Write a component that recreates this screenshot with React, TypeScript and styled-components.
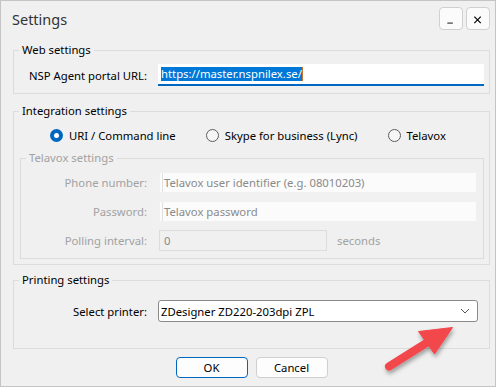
import React from "react";
import styled, { createGlobalStyle, css } from "styled-components";

const GlobalStyle = createGlobalStyle`
  html, body { margin: 0; padding: 0; background: #f0f0f0; }
  body {
    font-family: "Noto Sans", "Open Sans", sans-serif;
    font-size: 11.3px;
    color: #000;
  }
  * { box-sizing: border-box; }
`;

const Window = styled.div`
  position: relative;
  width: 496px;
  height: 387px;
  border: 1px solid #c4c4c4;
  background: #f0f0f0;
  display: flex;
  flex-direction: column;
  overflow: hidden;
`;

const TitleBar = styled.div`
  display: flex;
  align-items: flex-start;
  height: 41px;
  padding: 6px 5px 0 11px;
`;

const Title = styled.div`
  flex: 1;
  font-size: 14.5px;
  line-height: 20px;
  padding-top: 2px;
  color: #333;
`;

const CaptionButton = styled.div`
  width: 24px;
  height: 23px;
  margin-left: 3px;
  border: 1px solid #d0d0d0;
  border-radius: 4px;
  background: #fbfbfb;
  display: flex;
  align-items: center;
  justify-content: center;
`;

const Body = styled.div`
  flex: 1;
  display: flex;
  flex-direction: column;
  padding: 0 5px 0 12px;
`;

const Group = styled.fieldset<{ $mt?: number }>`
  margin: ${(p) => p.$mt ?? 0}px 0 0 0;
  padding: 0;
  min-width: 0;
  border: 1px solid #dcdcdc;
`;

const Legend = styled.legend<{ $disabled?: boolean }>`
  margin-left: 5px;
  padding: 0 3px;
  line-height: 16px;
  color: ${(p) => (p.$disabled ? "#a2a2a2" : "#000")};
`;

const GroupBody = styled.div<{ $pad: string; $gap?: number }>`
  display: flex;
  flex-direction: column;
  padding: ${(p) => p.$pad};
  gap: ${(p) => p.$gap ?? 0}px;
`;

const FieldRow = styled.div`
  display: flex;
  align-items: center;
`;

const FieldLabel = styled.div<{ $w: number; $gap: number; $disabled?: boolean }>`
  width: ${(p) => p.$w}px;
  margin-right: ${(p) => p.$gap}px;
  text-align: right;
  white-space: nowrap;
  color: ${(p) => (p.$disabled ? "#a2a2a2" : "#000")};
`;

const UrlBox = styled.div`
  flex: 1;
  height: 22px;
  background: #fff;
  border-bottom: 2px solid #0067c0;
  padding-left: 3px;
  display: flex;
  align-items: center;
`;

const Selected = styled.span`
  background: #0078d7;
  color: #fff;
  line-height: 14px;
  height: 14px;
  display: inline-block;
`;

const Caret = styled.span`
  width: 1px;
  height: 14px;
  background: #c8702c;
`;

const DisabledBox = styled.div<{ $w?: number; $inactive?: boolean }>`
  height: 21px;
  ${(p) => (p.$w ? css`width: ${p.$w}px;` : css`flex: 1;`)}
  padding-left: 4px;
  display: flex;
  align-items: center;
  color: #8a8a8a;
  white-space: nowrap;
  ${(p) =>
    p.$inactive
      ? css`
          background: #f0f0f0;
          border: 1px solid #dcdcdc;
        `
      : css`
          background: #fbfbfb;
          border: 1px solid #f1f1f1;
          box-shadow: inset 2px 0 0 #fbfbfb, inset 3px 0 0 #e0e0e0;
        `}
`;

const Unit = styled.span`
  margin-left: 10px;
  color: #a2a2a2;
`;

const RadioRow = styled.div`
  display: flex;
  align-items: center;
  height: 16px;
  gap: 30px;
  padding-left: 30px;
`;

const RadioLabel = styled.label`
  display: flex;
  align-items: center;
  gap: 6px;
  white-space: nowrap;
`;

const RadioCircle = styled.span<{ $checked?: boolean }>`
  width: 13px;
  height: 13px;
  border-radius: 50%;
  display: flex;
  align-items: center;
  justify-content: center;
  ${(p) =>
    p.$checked
      ? css`
          background: #0067c0;
          &::after {
            content: "";
            width: 5px;
            height: 5px;
            border-radius: 50%;
            background: #fff;
          }
        `
      : css`
          border: 1px solid #5c5c5c;
          background: #f6f6f6;
        `}
`;

const SelectBox = styled.div`
  flex: 1;
  height: 22px;
  background: #fff;
  border: 1px solid #8a8a8a;
  border-radius: 3px;
  padding: 0 5px 0 2px;
  display: flex;
  align-items: center;
  justify-content: space-between;
`;

const ButtonRow = styled.div`
  display: flex;
  justify-content: center;
  gap: 8px;
  margin-top: 8px;
`;

const Button = styled.div<{ $primary?: boolean }>`
  width: 72px;
  height: 21px;
  border-radius: 4px;
  background: #fdfdfd;
  border: 1px solid ${(p) => (p.$primary ? "#0067c0" : "#d0d0d0")};
  display: flex;
  align-items: center;
  justify-content: center;
`;

const ArrowOverlay = styled.svg`
  position: absolute;
  left: 369px;
  top: 317px;
  pointer-events: none;
`;

export default function App() {
  return (
    <>
      <GlobalStyle />
      <Window>
        <TitleBar>
          <Title>Settings</Title>
          <CaptionButton>
            <svg width="24" height="23" viewBox="0 0 24 23">
              <line x1="8" y1="16.5" x2="14" y2="16.5" stroke="#000" strokeWidth="1" />
            </svg>
          </CaptionButton>
          <CaptionButton>
            <svg width="24" height="23" viewBox="0 0 24 23">
              <path d="M8 9.5 L15 16.5 M15 9.5 L8 16.5" stroke="#000" strokeWidth="1.3" />
            </svg>
          </CaptionButton>
        </TitleBar>
        <Body>
          <Group>
            <Legend>Web settings</Legend>
            <GroupBody $pad="6px 5px 7px 0">
              <FieldRow>
                <FieldLabel $w={133} $gap={11}>NSP Agent portal URL:</FieldLabel>
                <UrlBox>
                  <Selected>https://master.nspnilex.se/</Selected>
                  <Caret />
                </UrlBox>
              </FieldRow>
            </GroupBody>
          </Group>

          <Group $mt={9}>
            <Legend>Integration settings</Legend>
            <GroupBody $pad="8px 5px 5px 6px" $gap={7}>
              <RadioRow>
                <RadioLabel>
                  <RadioCircle $checked />
                  URI / Command line
                </RadioLabel>
                <RadioLabel>
                  <RadioCircle />
                  Skype for business (Lync)
                </RadioLabel>
                <RadioLabel>
                  <RadioCircle />
                  Telavox
                </RadioLabel>
              </RadioRow>
              <Group>
                <Legend $disabled>Telavox settings</Legend>
                <GroupBody $pad="6px 6px 7px 0" $gap={8}>
                  <FieldRow>
                    <FieldLabel $w={126} $gap={12} $disabled>Phone number:</FieldLabel>
                    <DisabledBox>Telavox user identifier (e.g. 08010203)</DisabledBox>
                  </FieldRow>
                  <FieldRow>
                    <FieldLabel $w={126} $gap={12} $disabled>Password:</FieldLabel>
                    <DisabledBox>Telavox password</DisabledBox>
                  </FieldRow>
                  <FieldRow>
                    <FieldLabel $w={126} $gap={12} $disabled>Polling interval:</FieldLabel>
                    <DisabledBox $w={168} $inactive>0</DisabledBox>
                    <Unit>seconds</Unit>
                  </FieldRow>
                </GroupBody>
              </Group>
            </GroupBody>
          </Group>

          <Group $mt={7}>
            <Legend>Printing settings</Legend>
            <GroupBody $pad="12px 11px 26px 0">
              <FieldRow>
                <FieldLabel $w={133} $gap={11}>Select printer:</FieldLabel>
                <SelectBox>
                  <span>ZDesigner ZD220-203dpi ZPL</span>
                  <svg width="14" height="6" viewBox="0 0 14 6">
                    <polyline points="3,1 7,5 11,1" fill="none" stroke="#555" strokeWidth="1" />
                  </svg>
                </SelectBox>
              </FieldRow>
            </GroupBody>
          </Group>

          <ButtonRow>
            <Button $primary>OK</Button>
            <Button>Cancel</Button>
          </ButtonRow>
        </Body>

        <ArrowOverlay width="100" height="70" viewBox="370 318 100 70">
          <defs>
            <filter id="arrowShadow" x="-30%" y="-30%" width="160%" height="160%">
              <feDropShadow dx="1" dy="3" stdDeviation="2" floodColor="#000" floodOpacity="0.35" />
            </filter>
          </defs>
          <g filter="url(#arrowShadow)" fill="#f2464b" stroke="#f2464b">
            <line x1="389" y1="366.5" x2="428" y2="342" strokeWidth="8" strokeLinecap="round" />
            <polygon points="452.5,327.5 418.5,331.5 434.5,354" strokeWidth="1" strokeLinejoin="round" />
          </g>
        </ArrowOverlay>
      </Window>
    </>
  );
}
